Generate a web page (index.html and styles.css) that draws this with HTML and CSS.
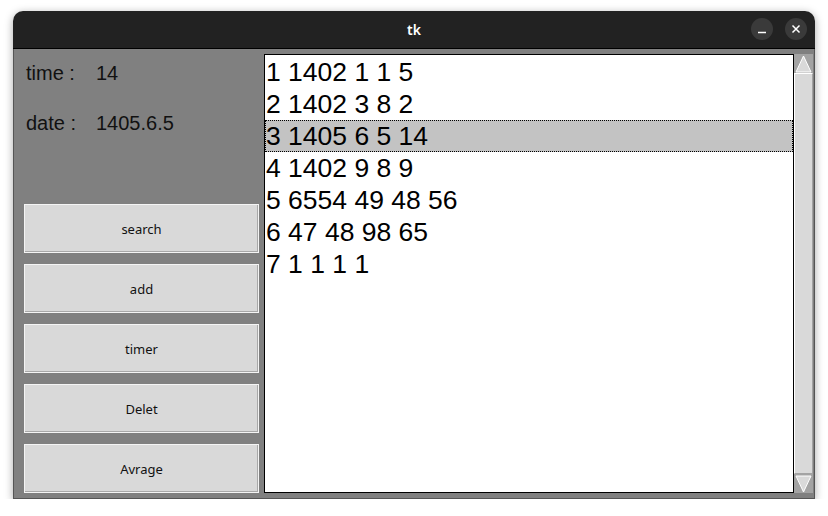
FILE: index.html
```html
<!DOCTYPE html>
<html lang="en">
<head>
    <meta charset="UTF-8">
    <meta name="viewport" content="width=device-width, initial-scale=1.0">
    <title>tk</title>
    <link rel="stylesheet" href="styles.css">
</head>
<body>
    <div class="window">
        <div class="titlebar">
            <span class="title">tk</span>
            <div class="controls">
                <span class="ctl">
                    <svg width="10" height="10" viewBox="0 0 10 10"><path d="M1 8.5h8" stroke="#fff" stroke-width="1.4"/></svg>
                </span>
                <span class="ctl">
                    <svg width="10" height="10" viewBox="0 0 10 10"><path d="M1.5 1.5l7 7M8.5 1.5l-7 7" stroke="#fff" stroke-width="1.5"/></svg>
                </span>
            </div>
        </div>

        <div class="content">
            <div class="side">
                <div class="info">
                    <div class="info-row"><span class="label">time :</span><span>14</span></div>
                    <div class="info-row"><span class="label">date :</span><span>1405.6.5</span></div>
                </div>
                <div class="buttons">
                    <button>search</button>
                    <button>add</button>
                    <button>timer</button>
                    <button>Delet</button>
                    <button>Avrage</button>
                </div>
            </div>

            <ul class="listbox">
                <li>1 1402 1 1 5</li>
                <li>2 1402 3 8 2</li>
                <li class="selected">3 1405 6 5 14</li>
                <li>4 1402 9 8 9</li>
                <li>5 6554 49 48 56</li>
                <li>6 47 48 98 65</li>
                <li>7 1 1 1 1</li>
            </ul>

            <div class="scrollbar">
                <div class="arrow">
                    <svg width="17" height="18" viewBox="0 0 17 18"><path d="M8.5 1L1 17h15z" fill="#d9d9d9" stroke="#fff" stroke-width="1"/></svg>
                </div>
                <div class="slider"></div>
                <div class="arrow">
                    <svg width="17" height="18" viewBox="0 0 17 18"><path d="M1 1h15L8.5 17z" fill="#d9d9d9" stroke="#fff" stroke-width="1"/></svg>
                </div>
            </div>
        </div>
    </div>
</body>
</html>
```

FILE: styles.css
```css
body {
    margin: 0;
    background: #fff;
    font-family: "Liberation Sans", Arial, sans-serif;
}
.window {
    margin: 11px 0 0 13px;
    width: 802px;
    border-radius: 10px 10px 0 0;
    box-shadow: 0 2px 8px rgba(0, 0, 0, 0.35);
    overflow: hidden;
}
.titlebar {
    height: 37px;
    background: #222;
    border-bottom: 1px solid #000;
    position: relative;
    display: flex;
    align-items: center;
    justify-content: center;
}
.title {
    color: #fff;
    font-family: "Noto Sans", sans-serif;
    font-size: 14px;
    font-weight: 600;
}
.controls {
    position: absolute;
    right: 8px;
    top: 7px;
    display: flex;
    gap: 12px;
}
.ctl {
    width: 22px;
    height: 22px;
    border-radius: 50%;
    background: #3a3a3a;
    display: flex;
    align-items: center;
    justify-content: center;
}
.content {
    height: 450px;
    box-sizing: border-box;
    background: #808080;
    border: 1px solid #555;
    border-top: none;
    display: flex;
}
.side {
    width: 250px;
    display: flex;
    flex-direction: column;
}
.info {
    padding: 13px 0 0 12px;
    display: flex;
    flex-direction: column;
    gap: 27px;
    font-size: 20px;
    color: #111;
}
.info-row {
    line-height: 23px;
    display: flex;
}
.label {
    width: 70px;
}
.buttons {
    margin-top: auto;
    padding: 0 5px 5px 10px;
    display: flex;
    flex-direction: column;
    gap: 11px;
}
.buttons button {
    height: 49px;
    width: 235px;
    background: #d9d9d9;
    border: 1px solid #f4f4f4;
    box-shadow: inset -1px -1px 0 #a8a8a8;
    font-family: "Noto Sans", sans-serif;
    font-size: 13px;
    color: #111;
    padding: 0;
}
.listbox {
    list-style: none;
    margin: 5px 0 0 0;
    padding: 1px 0 0 0;
    width: 530px;
    height: 439px;
    box-sizing: border-box;
    background: #fff;
    border: 1px solid #000;
    font-size: 26.5px;
    color: #000;
}
.listbox li {
    height: 32px;
    line-height: 32px;
    padding-left: 1px;
    box-sizing: border-box;
}
.listbox .selected {
    background: #c3c3c3;
    border: 1px dotted #000;
    padding-left: 0;
    line-height: 30px;
}
.scrollbar {
    margin-top: 5px;
    width: 19px;
    height: 439px;
    box-sizing: border-box;
    display: flex;
    flex-direction: column;
    background: #d9d9d9;
}
.arrow {
    height: 19px;
    background: #a3a3a3;
    display: flex;
    align-items: center;
    justify-content: center;
}
.slider {
    flex: 1;
    background: #d9d9d9;
    border: 1px solid #fff;
    border-right-color: #a3a3a3;
    border-bottom-color: #a3a3a3;
}
```
